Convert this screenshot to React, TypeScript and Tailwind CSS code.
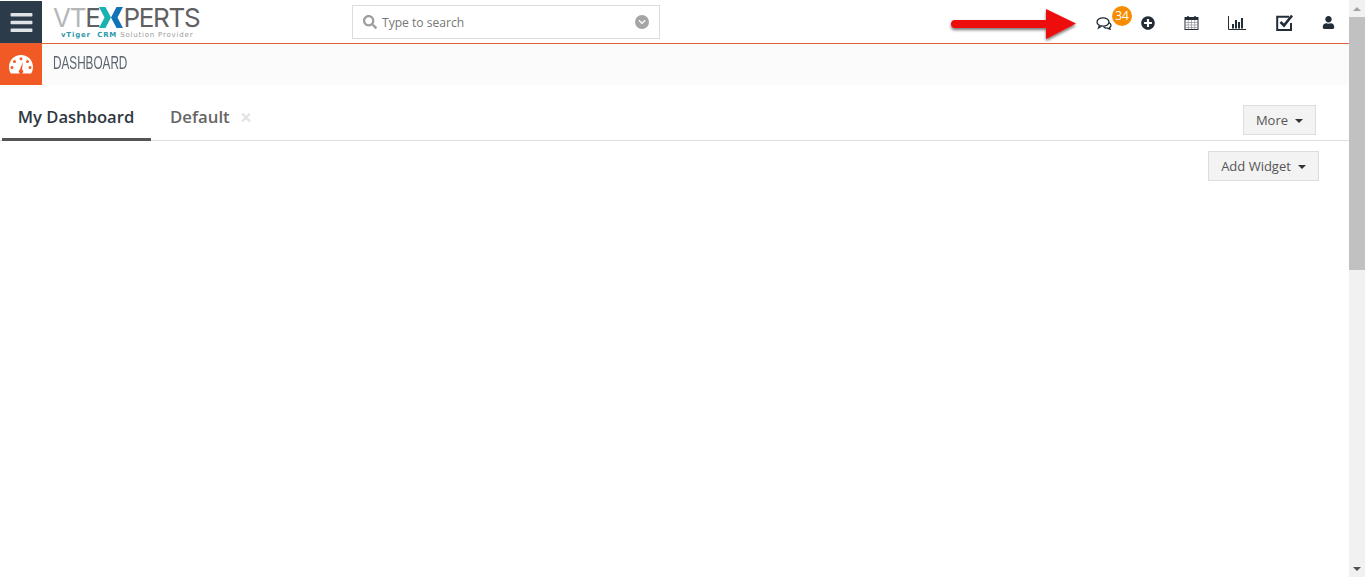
import React from "react";
import { FaPlusCircle, FaUser, FaChevronDown, FaSearch, FaTimes, FaBars } from "react-icons/fa";

const OS = "font-['Open_Sans',sans-serif]";

function Caret() {
  return <span className="inline-block ml-[7px] mt-[2px] w-0 h-0 border-x-[4px] border-x-transparent border-t-[4px] border-t-[#333]" />;
}

function Btn({ label, className }: { label: string; className: string }) {
  return (
    <button className={`h-[30px] bg-[#f3f3f3] border border-[#dddddd] text-[13px] text-[#555] flex items-center justify-center ${className}`}>
      <span className="mt-[2px]">{label}</span>
      <Caret />
    </button>
  );
}

function Gauge() {
  return (
    <svg width="26" height="22" viewBox="0 0 26 22" fill="#fff">
      <path fillRule="evenodd" d="M13 1C6 1 1 6.500 1 13c0 2.500.7 4.800 1.800 6.500h20.400C24.300 17.800 25 15.500 25 13 25 6.500 20 1 13 1zM13 3.200a1.500 1.500 0 1 1 0 3 1.500 1.500 0 0 1 0-3zM6.500 6a1.500 1.500 0 1 1 0 3 1.500 1.500 0 0 1 0-3zM19.500 6a1.500 1.500 0 1 1 0 3 1.500 1.500 0 0 1 0-3zM4 12a1.500 1.500 0 1 1 0 3 1.500 1.500 0 0 1 0-3zM22 12a1.500 1.500 0 1 1 0 3 1.500 1.500 0 0 1 0-3zM15 8l-1 7.300a2.300 2.300 0 0 1-.2 4.200h-1.600a2.300 2.300 0 0 1-.4-4.100z" />
    </svg>
  );
}

function LogoX() {
  return (
    <svg width="24" height="21" viewBox="0 0 26 21" preserveAspectRatio="none" className="shrink-0">
      <path d="M0 0h7l6 10.500L7 21H0l6-10.500z" fill="#17b3b0" />
      <path d="M26 0h-7l-6 10.500L19 21h7l-6-10.500z" fill="#1273b8" />
    </svg>
  );
}

function Comments() {
  return (
    <svg width="16" height="14" viewBox="0 0 16 14" fill="none" stroke="#1f2a33" strokeWidth="1.300">
      <ellipse cx="7" cy="6" rx="6" ry="4.200" fill="#fff" />
      <path d="M3.500 9.500 2.500 12l3-1.700" fill="#fff" />
      <path d="M12.800 6.500c1.300.7 2.200 1.700 2.200 2.800 0 1-.6 1.800-1.500 2.300l.6 1.700-2.500-1.200c-1.500.2-3-.2-4-1" />
    </svg>
  );
}

function Calendar() {
  return (
    <svg width="15" height="15" viewBox="0 0 15 15" fill="none">
      <rect x="1" y="2.500" width="13" height="12" fill="#fff" stroke="#222d38" />
      <rect x="1" y="2.500" width="13" height="2.500" fill="#222d38" />
      <path d="M4 1v3M11 1v3" stroke="#222d38" strokeWidth="1.500" />
      <path d="M1 7.500h13M1 10h13M1 12.500h13M4.300 5v9M7.500 5v9M10.700 5v9" stroke="#8b8f94" strokeWidth=".7" />
    </svg>
  );
}

function Chart() {
  return (
    <svg width="18" height="14" viewBox="0 0 18 14">
      <path d="M.5 0v13.500H18" fill="none" stroke="#222d38" />
      <rect x="4" y="8" width="2" height="4.500" fill="#222d38" />
      <rect x="7" y="4" width="2" height="8.500" fill="#222d38" />
      <rect x="10" y="6" width="2" height="6.500" fill="#222d38" />
      <rect x="13" y="2" width="2" height="10.500" fill="#222d38" />
    </svg>
  );
}

function CheckBox() {
  return (
    <svg width="18" height="17" viewBox="0 0 18 17" fill="none" stroke="#222d38">
      <path d="M13 2.800H1.200V16H15V9" strokeWidth="2" />
      <path d="M4.500 8 8 11.500 16 1.500" strokeWidth="2.600" />
    </svg>
  );
}

function Arrow() {
  return (
    <svg className="absolute left-[948px] top-[6px]" width="132" height="36" viewBox="0 0 132 36">
      <defs>
        <filter id="s" x="-10%" y="-30%" width="120%" height="170%">
          <feDropShadow dx="0" dy="2" stdDeviation="1.500" floodColor="#000" floodOpacity=".55" />
        </filter>
      </defs>
      <path filter="url(#s)" d="M7 14h91V3l30 14.500L98 33V22H7a4 4 0 0 1 0-8z" fill="#ee0808" />
    </svg>
  );
}

export default function App() {
  return (
    <div className={`${OS} relative flex h-[577px] w-full overflow-hidden bg-white`}>
      <div className="flex-1 min-w-0 flex flex-col">
        <header className="mt-px h-[43px] flex items-stretch border-b border-[#e2633a] bg-white shrink-0">
          <div className="w-[42px] bg-[#2c3b49] flex items-center justify-center shrink-0">
            <FaBars className="text-[#dfe3e6] w-[23px] h-[25px]" />
          </div>
          <div className="w-[310px] shrink-0 pl-[11px] flex flex-col">
            <div className="font-['Inter',sans-serif] font-normal text-[26px] leading-[21px] mt-[6px] tracking-[-1.300px] whitespace-nowrap flex items-center h-[21px]" aria-label="VTEXPERTS">
              <span className="text-[#b5b6b8]">VT</span>
              <span className="text-[#5f6062]">E</span>
              <LogoX />
              <span className="text-[#5f6062]">PERTS</span>
            </div>
            <div className="font-['DejaVu_Sans',sans-serif] text-[7px] leading-[8px] ml-[8px] mt-[3px] tracking-[.8px] whitespace-nowrap">
              <span className="text-[#2f97a8] font-bold">vTiger&nbsp; CRM</span>
              <span className="text-[#9a9a9a]"> Solution Provider</span>
            </div>
          </div>
          <div className="w-[308px] h-[34px] mt-[4px] border border-[#dcdcdc] flex items-center pl-[10px] pr-[10px] shrink-0">
            <FaSearch className="w-[14px] h-[14px] text-[#9d9d9d]" />
            <span className="ml-[5px] mt-[2px] text-[12.100px] text-[#777]">Type to search</span>
            <span className="ml-auto w-[14px] h-[14px] rounded-full bg-[#a5a5a5] flex items-center justify-center">
              <FaChevronDown className="w-[8px] h-[8px] text-white" />
            </span>
          </div>
          <div className="flex-1 relative flex items-center justify-end pr-[14px]">
            <div className="flex items-center h-[16px] mt-[1px]">
              <span className="relative mr-[29px]">
                <Comments />
                <span className="absolute left-[16px] top-[-10px] w-[20px] h-[20px] rounded-full bg-[#f78c00] text-white text-[12px] leading-[20px] text-center">34</span>
              </span>
              <FaPlusCircle className="w-[14px] h-[14px] text-[#222d38] mr-[29px]" />
              <span className="mr-[29px] flex"><Calendar /></span>
              <span className="mr-[30px] flex"><Chart /></span>
              <span className="mr-[28px] flex"><CheckBox /></span>
              <FaUser className="w-[13px] h-[13px] text-[#222d38]" />
            </div>
          </div>
        </header>

        <div className="h-[41px] flex shrink-0 bg-[#fbfbfb]">
          <div className="w-[42px] bg-[#f15a24] flex items-center justify-center">
            <Gauge />
          </div>
          <div className="ml-[11px] pb-[2px] flex items-center text-[18px] font-['Liberation_Sans',sans-serif] text-[#5c6570] origin-left scale-x-[.652] whitespace-nowrap">DASHBOARD</div>
        </div>

        <div className="h-[56px] pl-[2px] pr-[33px] flex border-b border-[#dddddd] shrink-0">
          <div className="w-[149px] h-[56px] pt-[11px] pr-[1px] flex items-center justify-center border-b-[3px] border-[#555] text-[16.600px] font-semibold text-[#2f3742]">My Dashboard</div>
          <div className="ml-[19px] h-[55px] pt-[9px] flex items-center text-[16.800px] font-semibold text-[#666]">
            Default
            <FaTimes className="ml-[10px] w-[12px] h-[13px] text-[#e4e4e4]" />
          </div>
          <div className="ml-auto pt-[20px]">
            <Btn label="More" className="w-[73px]" />
          </div>
        </div>

        <div className="flex justify-end pr-[30px] pt-[10px]">
          <Btn label="Add Widget" className="w-[111px]" />
        </div>
      </div>

      <div className="w-[16px] shrink-0 bg-[#f1f1f1] flex flex-col items-center">
        <div className="h-[17px] w-full flex items-center justify-center">
          <span className="w-0 h-0 border-x-[4px] border-x-transparent border-b-[4px] border-b-[#a3a3a3]" />
        </div>
        <div className="h-[253px] w-full bg-[#c1c1c1]" />
        <div className="mt-auto h-[17px] w-full flex items-center justify-center">
          <span className="w-0 h-0 border-x-[4px] border-x-transparent border-t-[4px] border-t-[#505050]" />
        </div>
      </div>

      <Arrow />
    </div>
  );
}
